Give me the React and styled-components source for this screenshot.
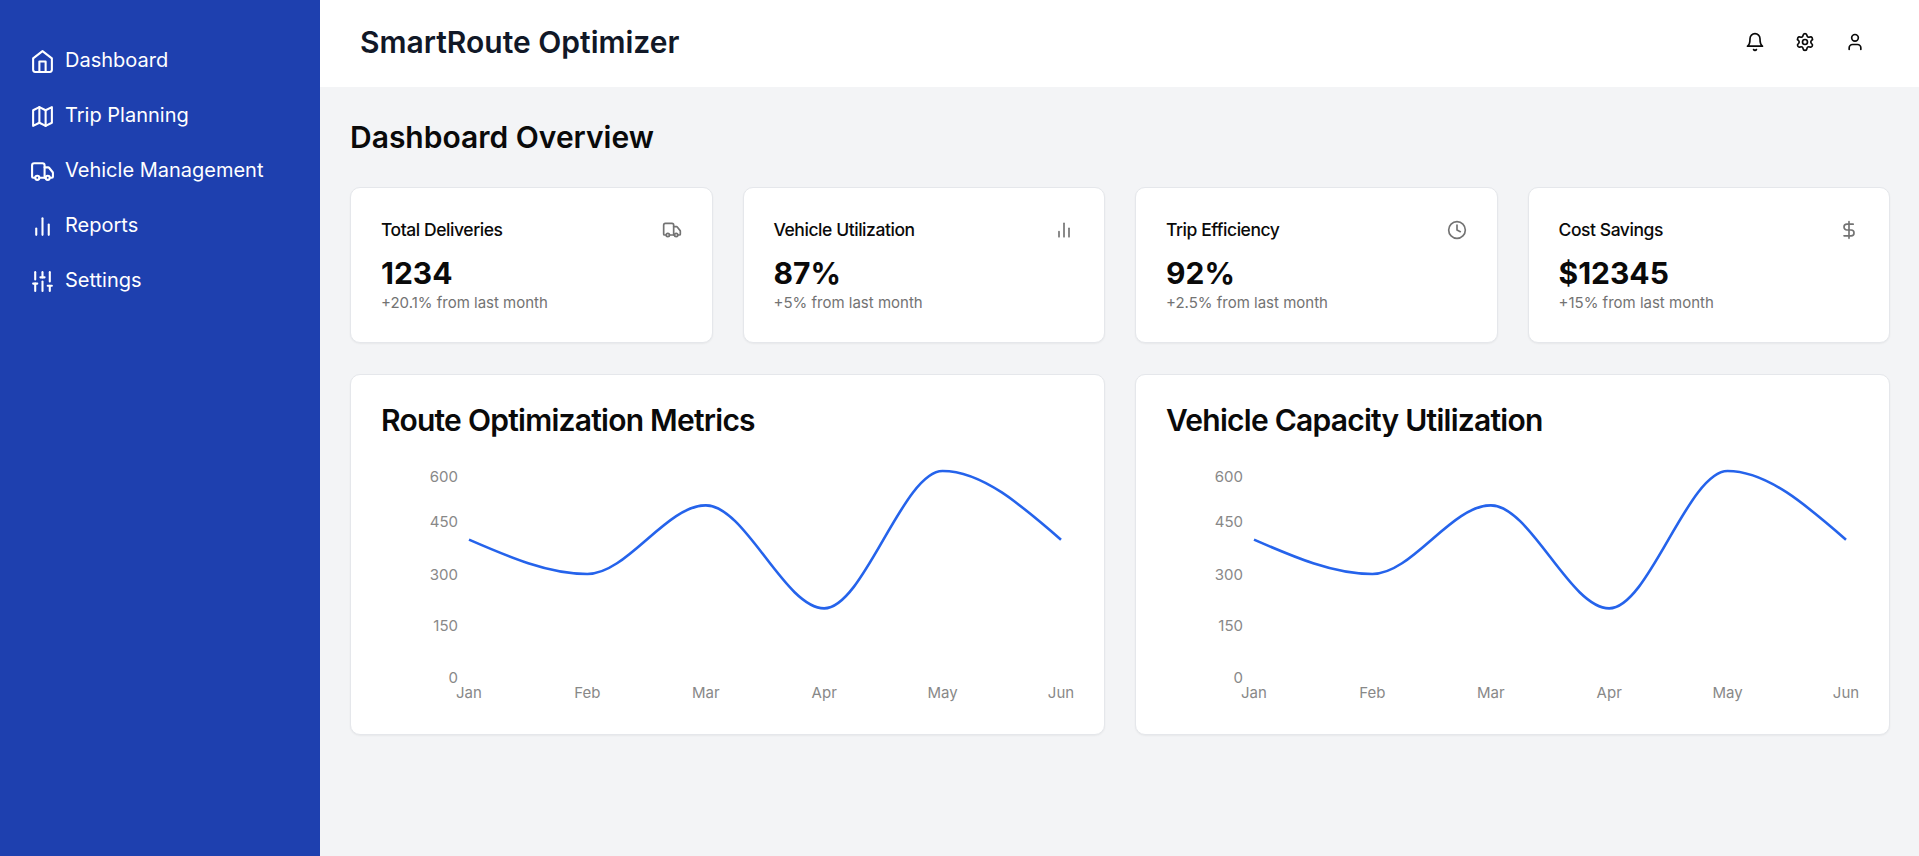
import React from "react"
import styled, { createGlobalStyle } from "styled-components"
import { Clock, DollarSign, Settings, SlidersVertical, Truck, User } from "lucide-react"

const GlobalStyle = createGlobalStyle`
    * {
        box-sizing: border-box;
    }
    html, body {
        margin: 0;
        height: 100%;
        overflow: hidden;
        background: #f3f4f6;
        font-family: "Inter", "Liberation Sans", sans-serif;
    }
    #root {
        height: 100%;
    }
`

const Shell = styled.div`
    display: flex;
    width: 1920px;
    height: 856px;
`

const Sidebar = styled.aside`
    width: 320px;
    flex-shrink: 0;
    background: #1e40af;
    padding: 32px 30px;
    display: flex;
    flex-direction: column;
`

const NavItem = styled.a`
    display: flex;
    align-items: center;
    gap: 10px;
    height: 55px;
    color: #fff;
    font-size: 20px;
    font-weight: 400;
    text-decoration: none;
    svg {
        width: 25px;
        height: 25px;
        flex-shrink: 0;
        margin-top: 3px;
    }
`

const Content = styled.div`
    flex: 1;
    min-width: 0;
    display: flex;
    flex-direction: column;
`

const Header = styled.header`
    height: 87px;
    flex-shrink: 0;
    background: #fff;
    display: flex;
    align-items: center;
    justify-content: space-between;
    padding: 0 45px 3px 40px;
`

const AppTitle = styled.h1`
    margin: 0;
    font-size: 30px;
    font-weight: 600;
    color: #111827;
`

const HeaderActions = styled.div`
    display: flex;
    gap: 10px;
`

const IconButton = styled.button`
    width: 40px;
    height: 40px;
    border: none;
    background: transparent;
    padding: 0;
    display: flex;
    align-items: center;
    justify-content: center;
    color: #0a0a0a;
    svg {
        width: 20px;
        height: 20px;
    }
`

const Main = styled.main`
    padding: 30px;
`

const PageTitle = styled.h2`
    margin: 0 0 30px;
    font-size: 30px;
    line-height: 40px;
    font-weight: 600;
    color: #0a0a0a;
`

const StatGrid = styled.div`
    display: grid;
    grid-template-columns: repeat(4, 1fr);
    gap: 30px;
    margin-bottom: 31px;
`

const ChartGrid = styled.div`
    display: grid;
    grid-template-columns: repeat(2, 1fr);
    gap: 30px;
`

const Card = styled.section`
    background: #fff;
    border: 1px solid #e5e7eb;
    border-radius: 10px;
    box-shadow: 0 1px 2px rgba(0, 0, 0, 0.05);
`

const StatCard = styled(Card)`
    height: 156px;
    padding: 30px;
    color: #0a0a0a;
`

const StatTop = styled.div`
    display: flex;
    align-items: center;
    justify-content: space-between;
    height: 23px;
    margin-bottom: 12px;
`

const StatLabel = styled.span`
    font-size: 17.5px;
    font-weight: 500;
    letter-spacing: -0.4375px;
`

const StatIcon = styled.span`
    display: flex;
    color: #737373;
    svg {
        width: 20px;
        height: 20px;
    }
`

const StatValue = styled.div`
    font-size: 30px;
    line-height: 40px;
    font-weight: 700;
`

const StatNote = styled.div`
    font-size: 15px;
    line-height: 20px;
    color: #737373;
`

const ChartCard = styled(Card)`
    height: 361px;
    padding: 30px 30px 0;
`

const ChartTitle = styled.h3`
    margin: 0 0 30px;
    font-size: 30px;
    line-height: 30px;
    font-weight: 600;
    letter-spacing: -0.75px;
    color: #0a0a0a;
`

const ChartSvg = styled.svg`
    display: block;
    width: 100%;
    height: 240px;
    overflow: visible;
`

const TickLabel = styled.text`
    font-size: 15px;
    fill: #888;
`

const Line = styled.path`
    fill: none;
    stroke: #2563eb;
    stroke-width: 2.6;
`

// the reference uses older lucide drawings for these four
const OutlineIcon = ({ children }) => (
    <svg
        viewBox="0 0 24 24"
        fill="none"
        stroke="currentColor"
        strokeWidth="2"
        strokeLinecap="round"
        strokeLinejoin="round"
    >
        {children}
    </svg>
)

const HomeIcon = () => (
    <OutlineIcon>
        <path d="m3 9 9-7 9 7v11a2 2 0 0 1-2 2H5a2 2 0 0 1-2-2z" />
        <polyline points="9 22 9 12 15 12 15 22" />
    </OutlineIcon>
)

const MapIcon = () => (
    <OutlineIcon>
        <polygon points="3 6 9 3 15 6 21 3 21 18 15 21 9 18 3 21" />
        <line x1="9" x2="9" y1="3" y2="18" />
        <line x1="15" x2="15" y1="6" y2="21" />
    </OutlineIcon>
)

const BarsIcon = () => (
    <OutlineIcon>
        <line x1="18" x2="18" y1="20" y2="10" />
        <line x1="12" x2="12" y1="20" y2="4" />
        <line x1="6" x2="6" y1="20" y2="14" />
    </OutlineIcon>
)

const BellIcon = () => (
    <OutlineIcon>
        <path d="M6 8a6 6 0 0 1 12 0c0 7 3 9 3 9H3s3-2 3-9" />
        <path d="M10.3 21a1.94 1.94 0 0 0 3.4 0" />
    </OutlineIcon>
)

const navItems = [
    { label: "Dashboard", icon: HomeIcon },
    { label: "Trip Planning", icon: MapIcon },
    { label: "Vehicle Management", icon: Truck },
    { label: "Reports", icon: BarsIcon },
    { label: "Settings", icon: SlidersVertical },
]

const stats = [
    { label: "Total Deliveries", value: "1234", note: "+20.1% from last month", icon: Truck },
    { label: "Vehicle Utilization", value: "87%", note: "+5% from last month", icon: BarsIcon },
    { label: "Trip Efficiency", value: "92%", note: "+2.5% from last month", icon: Clock },
    { label: "Cost Savings", value: "$12345", note: "+15% from last month", icon: DollarSign },
]

const chartData = [
    { month: "Jan", value: 400 },
    { month: "Feb", value: 300 },
    { month: "Mar", value: 500 },
    { month: "Apr", value: 200 },
    { month: "May", value: 600 },
    { month: "Jun", value: 400 },
]

// y ticks with the label y of each one, the top label sits lower than its value
const yTicks = [
    { label: "600", y: 11 },
    { label: "450", y: 56.5 },
    { label: "300", y: 109 },
    { label: "150", y: 160 },
    { label: "0", y: 212 },
]

const xStart = 88
const xStep = 118.4
const yZero = 212
const yScale = 206 / 600

const pointX = (i) => xStart + i * xStep
const pointY = (value) => yZero - value * yScale

// same curve as d3 curveMonotoneX
function monotonePath(points) {
    const slopes = points.slice(0, -1).map((p, i) => (points[i + 1].y - p.y) / xStep)
    const tangents = points.map((_, i) => {
        if (i === 0 || i === points.length - 1) return null
        const a = slopes[i - 1]
        const b = slopes[i]
        const p = (a + b) / 2
        return (Math.sign(a) + Math.sign(b)) * Math.min(Math.abs(a), Math.abs(b), 0.5 * Math.abs(p)) || 0
    })
    const last = points.length - 1
    tangents[0] = (3 * slopes[0] - tangents[1]) / 2
    tangents[last] = (3 * slopes[last - 1] - tangents[last - 1]) / 2

    const dx = xStep / 3
    let d = `M${points[0].x},${points[0].y}`
    for (let i = 0; i < last; i++) {
        const p = points[i]
        const q = points[i + 1]
        d += `C${p.x + dx},${p.y + dx * tangents[i]},${q.x - dx},${q.y - dx * tangents[i + 1]},${q.x},${q.y}`
    }
    return d
}

const linePath = monotonePath(chartData.map((d, i) => ({ x: pointX(i), y: pointY(d.value) })))

function LineChart() {
    return (
        <ChartSvg>
            {yTicks.map((tick) => (
                <TickLabel key={tick.label} x={xStart - 11} y={tick.y} textAnchor="end" dominantBaseline="central">
                    {tick.label}
                </TickLabel>
            ))}
            {chartData.map((d, i) => (
                <TickLabel key={d.month} x={pointX(i)} y={227} textAnchor="middle" dominantBaseline="central">
                    {d.month}
                </TickLabel>
            ))}
            <Line d={linePath} />
        </ChartSvg>
    )
}

export default function App() {
    return (
        <>
            <GlobalStyle />
            <Shell>
                <Sidebar>
                    {navItems.map(({ label, icon: Icon }) => (
                        <NavItem key={label} href="#">
                            <Icon />
                            {label}
                        </NavItem>
                    ))}
                </Sidebar>
                <Content>
                    <Header>
                        <AppTitle>SmartRoute Optimizer</AppTitle>
                        <HeaderActions>
                            <IconButton><BellIcon /></IconButton>
                            <IconButton><Settings /></IconButton>
                            <IconButton><User /></IconButton>
                        </HeaderActions>
                    </Header>
                    <Main>
                        <PageTitle>Dashboard Overview</PageTitle>
                        <StatGrid>
                            {stats.map(({ label, value, note, icon: Icon }) => (
                                <StatCard key={label}>
                                    <StatTop>
                                        <StatLabel>{label}</StatLabel>
                                        <StatIcon><Icon /></StatIcon>
                                    </StatTop>
                                    <StatValue>{value}</StatValue>
                                    <StatNote>{note}</StatNote>
                                </StatCard>
                            ))}
                        </StatGrid>
                        <ChartGrid>
                            <ChartCard>
                                <ChartTitle>Route Optimization Metrics</ChartTitle>
                                <LineChart />
                            </ChartCard>
                            <ChartCard>
                                <ChartTitle>Vehicle Capacity Utilization</ChartTitle>
                                <LineChart />
                            </ChartCard>
                        </ChartGrid>
                    </Main>
                </Content>
            </Shell>
        </>
    )
}
